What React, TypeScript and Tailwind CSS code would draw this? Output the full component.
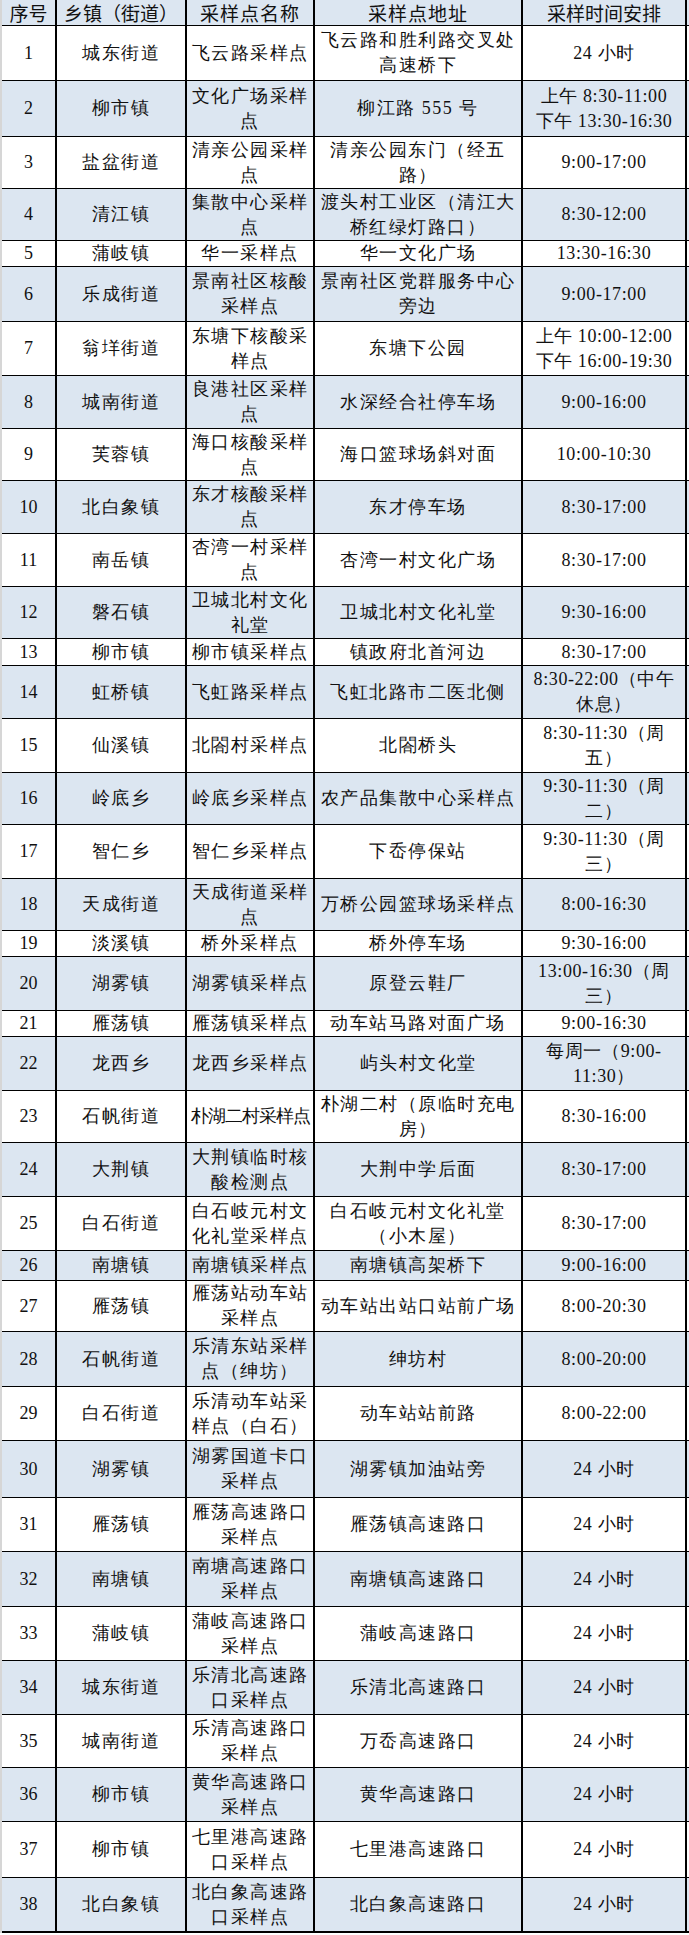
type Row = {
  h: string;
  town: string;
  site: string[];
  addr: string[];
  time: string[];
  tight?: boolean;
};

const rows: Row[] = [
  { h: "h-[55px]", town: "城东街道", site: ["飞云路采样点"], addr: ["飞云路和胜利路交叉处", "高速桥下"], time: ["24 小时"] },
  { h: "h-[56px]", town: "柳市镇", site: ["文化广场采样", "点"], addr: ["柳江路 555 号"], time: ["上午 8:30-11:00", "下午 13:30-16:30"] },
  { h: "h-[52px]", town: "盐盆街道", site: ["清亲公园采样", "点"], addr: ["清亲公园东门（经五", "路）"], time: ["9:00-17:00"] },
  { h: "h-[52px]", town: "清江镇", site: ["集散中心采样", "点"], addr: ["渡头村工业区（清江大", "桥红绿灯路口）"], time: ["8:30-12:00"] },
  { h: "h-[26px]", town: "蒲岐镇", site: ["华一采样点"], addr: ["华一文化广场"], time: ["13:30-16:30"] },
  { h: "h-[55px]", town: "乐成街道", site: ["景南社区核酸", "采样点"], addr: ["景南社区党群服务中心", "旁边"], time: ["9:00-17:00"] },
  { h: "h-[54px]", town: "翁垟街道", site: ["东塘下核酸采", "样点"], addr: ["东塘下公园"], time: ["上午 10:00-12:00", "下午 16:00-19:30"] },
  { h: "h-[53px]", town: "城南街道", site: ["良港社区采样", "点"], addr: ["水深经合社停车场"], time: ["9:00-16:00"] },
  { h: "h-[52px]", town: "芙蓉镇", site: ["海口核酸采样", "点"], addr: ["海口篮球场斜对面"], time: ["10:00-10:30"] },
  { h: "h-[53px]", town: "北白象镇", site: ["东才核酸采样", "点"], addr: ["东才停车场"], time: ["8:30-17:00"] },
  { h: "h-[53px]", town: "南岳镇", site: ["杏湾一村采样", "点"], addr: ["杏湾一村文化广场"], time: ["8:30-17:00"] },
  { h: "h-[52px]", town: "磐石镇", site: ["卫城北村文化", "礼堂"], addr: ["卫城北村文化礼堂"], time: ["9:30-16:00"] },
  { h: "h-[27px]", town: "柳市镇", site: ["柳市镇采样点"], addr: ["镇政府北首河边"], time: ["8:30-17:00"] },
  { h: "h-[53px]", town: "虹桥镇", site: ["飞虹路采样点"], addr: ["飞虹北路市二医北侧"], time: ["8:30-22:00（中午", "休息）"] },
  { h: "h-[54px]", town: "仙溪镇", site: ["北閤村采样点"], addr: ["北閤桥头"], time: ["8:30-11:30（周", "五）"] },
  { h: "h-[52px]", town: "岭底乡", site: ["岭底乡采样点"], addr: ["农产品集散中心采样点"], time: ["9:30-11:30（周", "二）"] },
  { h: "h-[54px]", town: "智仁乡", site: ["智仁乡采样点"], addr: ["下岙停保站"], time: ["9:30-11:30（周", "三）"] },
  { h: "h-[52px]", town: "天成街道", site: ["天成街道采样", "点"], addr: ["万桥公园篮球场采样点"], time: ["8:00-16:30"] },
  { h: "h-[26px]", town: "淡溪镇", site: ["桥外采样点"], addr: ["桥外停车场"], time: ["9:30-16:00"] },
  { h: "h-[54px]", town: "湖雾镇", site: ["湖雾镇采样点"], addr: ["原登云鞋厂"], time: ["13:00-16:30（周", "三）"] },
  { h: "h-[26px]", town: "雁荡镇", site: ["雁荡镇采样点"], addr: ["动车站马路对面广场"], time: ["9:00-16:30"] },
  { h: "h-[54px]", town: "龙西乡", site: ["龙西乡采样点"], addr: ["屿头村文化堂"], time: ["每周一（9:00-", "11:30）"] },
  { h: "h-[52px]", town: "石帆街道", site: ["朴湖二村采样点"], addr: ["朴湖二村（原临时充电", "房）"], time: ["8:30-16:00"], tight: true },
  { h: "h-[54px]", town: "大荆镇", site: ["大荆镇临时核", "酸检测点"], addr: ["大荆中学后面"], time: ["8:30-17:00"] },
  { h: "h-[54px]", town: "白石街道", site: ["白石岐元村文", "化礼堂采样点"], addr: ["白石岐元村文化礼堂", "（小木屋）"], time: ["8:30-17:00"] },
  { h: "h-[30px]", town: "南塘镇", site: ["南塘镇采样点"], addr: ["南塘镇高架桥下"], time: ["9:00-16:00"] },
  { h: "h-[51px]", town: "雁荡镇", site: ["雁荡站动车站", "采样点"], addr: ["动车站出站口站前广场"], time: ["8:00-20:30"] },
  { h: "h-[55px]", town: "石帆街道", site: ["乐清东站采样", "点（绅坊）"], addr: ["绅坊村"], time: ["8:00-20:00"] },
  { h: "h-[54px]", town: "白石街道", site: ["乐清动车站采", "样点（白石）"], addr: ["动车站站前路"], time: ["8:00-22:00"] },
  { h: "h-[57px]", town: "湖雾镇", site: ["湖雾国道卡口", "采样点"], addr: ["湖雾镇加油站旁"], time: ["24 小时"] },
  { h: "h-[54px]", town: "雁荡镇", site: ["雁荡高速路口", "采样点"], addr: ["雁荡镇高速路口"], time: ["24 小时"] },
  { h: "h-[55px]", town: "南塘镇", site: ["南塘高速路口", "采样点"], addr: ["南塘镇高速路口"], time: ["24 小时"] },
  { h: "h-[54px]", town: "蒲岐镇", site: ["蒲岐高速路口", "采样点"], addr: ["蒲岐高速路口"], time: ["24 小时"] },
  { h: "h-[54px]", town: "城东街道", site: ["乐清北高速路", "口采样点"], addr: ["乐清北高速路口"], time: ["24 小时"] },
  { h: "h-[53px]", town: "城南街道", site: ["乐清高速路口", "采样点"], addr: ["万岙高速路口"], time: ["24 小时"] },
  { h: "h-[54px]", town: "柳市镇", site: ["黄华高速路口", "采样点"], addr: ["黄华高速路口"], time: ["24 小时"] },
  { h: "h-[56px]", town: "柳市镇", site: ["七里港高速路", "口采样点"], addr: ["七里港高速路口"], time: ["24 小时"] },
  { h: "h-[55px]", town: "北白象镇", site: ["北白象高速路", "口采样点"], addr: ["北白象高速路口"], time: ["24 小时"] },
];

// Times-like serif for digits; CJK falls back to the system's serif CJK face (thin strokes)
const body = "font-['Liberation_Serif',serif] font-light text-[18px] leading-[25px] text-[#111]";

function Cell({ lines, className = "" }: { lines: string[]; className?: string }) {
  return (
    <div className={`flex flex-col items-center justify-center border-r-2 border-black text-center ${className}`}>
      {lines.map((l, i) => (
        <span key={i} className="whitespace-nowrap">
          {l}
        </span>
      ))}
    </div>
  );
}

export default function App() {
  return (
    <div className="w-[689px] bg-white">
      <div className="border-l-2 border-[#d6d6d6]">
        {/* Header */}
        <div className="grid h-[26px] grid-cols-[55px_130px_128px_208px_164px] border-b border-black bg-[#dce6f1] font-['Noto_Sans_CJK_SC',sans-serif] text-[19px] leading-[25px] text-[#111]">
          <Cell lines={["序号"]} />
          <Cell lines={["乡镇（街道）"]} />
          <Cell lines={["采样点名称"]} className="tracking-[1px]" />
          <Cell lines={["采样点地址"]} className="tracking-[1px]" />
          <Cell lines={["采样时间安排"]} />
        </div>

        {/* Rows */}
        {rows.map((r, i) => (
          <div
            key={i}
            className={`grid grid-cols-[55px_130px_128px_208px_164px] border-black ${r.h} ${
              i === rows.length - 1 ? "border-b-2" : "border-b"
            } ${i % 2 === 1 ? "bg-[#dce6f1]" : "bg-white"} ${body}`}
          >
            <Cell lines={[String(i + 1)]} className="font-normal" />
            <Cell lines={[r.town]} className="tracking-[1.5px]" />
            <Cell lines={r.site} className={r.tight ? "tracking-[-1px]" : "tracking-[1.5px]"} />
            <Cell lines={r.addr} className="tracking-[1.5px]" />
            <Cell lines={r.time} className="tracking-[0.6px]" />
          </div>
        ))}
      </div>
    </div>
  );
}
